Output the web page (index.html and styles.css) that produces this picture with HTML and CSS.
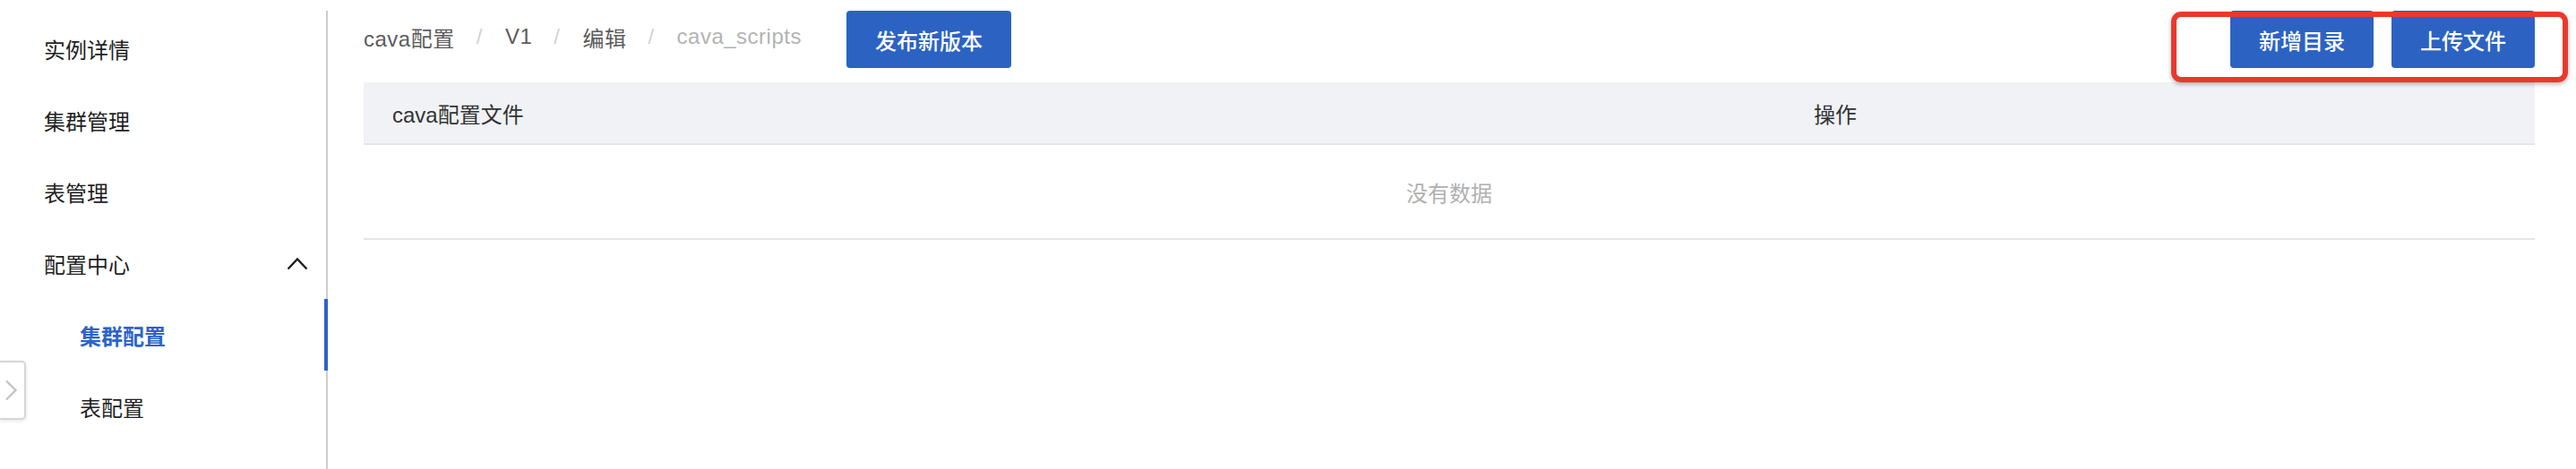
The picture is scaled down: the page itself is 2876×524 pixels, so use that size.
FILE: index.html
```html
<!DOCTYPE html>
<html lang="zh-CN">
<head>
<meta charset="utf-8">
<title>集群配置</title>
<link rel="stylesheet" href="styles.css">
</head>
<body>
<div class="app">
  <aside class="sidebar">
    <nav class="menu">
      <div class="menu-item">实例详情</div>
      <div class="menu-item">集群管理</div>
      <div class="menu-item">表管理</div>
      <div class="menu-item menu-group">
        <span>配置中心</span>
        <svg class="chev-up" width="24" height="15" viewBox="0 0 24 15"><path d="M1.5 13.5 L12 2.5 L22.5 13.5" fill="none" stroke="#1f1f1f" stroke-width="2.4"/></svg>
      </div>
      <div class="menu-item sub active">集群配置</div>
      <div class="menu-item sub">表配置</div>
    </nav>
  </aside>
  <div class="collapse-btn">
    <svg width="15" height="24" viewBox="0 0 15 24"><path d="M2 1.5 L12.5 12 L2 22.5" fill="none" stroke="#c4c4c4" stroke-width="2.4"/></svg>
  </div>
  <main class="main">
    <div class="toolbar">
      <div class="breadcrumb">
        <span class="crumb">cava配置</span><span class="sep">/</span>
        <span class="crumb">V1</span><span class="sep">/</span>
        <span class="crumb">编辑</span><span class="sep">/</span>
        <span class="crumb current">cava_scripts</span>
      </div>
      <button class="btn publish">发布新版本</button>
      <div class="spacer"></div>
      <div class="actions">
        <button class="btn action">新增目录</button>
        <button class="btn action">上传文件</button>
      </div>
    </div>
    <div class="table">
      <div class="thead">
        <div class="th">cava配置文件</div>
        <div class="th">操作</div>
      </div>
      <div class="empty">没有数据</div>
    </div>
  </main>
  <div class="highlight"></div>
</div>
</body>
</html>
```

FILE: styles.css
```css
html, body {
  margin: 0;
  padding: 0;
  background: #ffffff;
}
body {
  font-family: "Liberation Sans", "Noto Sans CJK SC", sans-serif;
  color: #1f1f1f;
}
.app {
  position: relative;
  display: flex;
  height: 524px;
  overflow: hidden;
}
.sidebar {
  width: 366px;
  flex: none;
  margin-top: 12px;
  border-right: 2px solid #c9cdd2;
  box-sizing: border-box;
}
.menu {
  padding-top: 2px;
}
.menu-item {
  position: relative;
  height: 80px;
  display: flex;
  align-items: center;
  padding-left: 49px;
  padding-right: 20px;
  font-size: 24px;
  color: #1f1f1f;
  box-sizing: border-box;
}
.menu-group {
  justify-content: space-between;
}
.chev-up {
  display: block;
}
.menu-item.sub {
  padding-left: 89px;
}
.menu-item.active {
  color: #2d63c8;
  font-weight: 700;
}
.menu-item.active::after {
  content: "";
  position: absolute;
  right: -2px;
  top: 0;
  bottom: 0;
  width: 4px;
  background: #2d63c8;
}
.collapse-btn {
  position: absolute;
  left: 0;
  top: 403px;
  width: 29px;
  height: 66px;
  box-sizing: border-box;
  border: 2px solid #d6d6d6;
  border-left: none;
  border-radius: 0 5px 5px 0;
  background: #fff;
  box-shadow: 0 1px 4px rgba(0, 0, 0, 0.12);
  display: flex;
  align-items: center;
  justify-content: center;
  padding-right: 2px;
}
.main {
  flex: 1;
  padding: 12px 46px 0 40px;
  min-width: 0;
}
.toolbar {
  display: flex;
  align-items: center;
  height: 64px;
}
.breadcrumb {
  display: flex;
  align-items: center;
  font-size: 24px;
  letter-spacing: 0.5px;
  padding-bottom: 6px;
  white-space: nowrap;
}
.crumb {
  color: #5c5c5c;
}
.crumb.current {
  color: #b3b3b3;
}
.sep {
  color: #d2d2d2;
  margin: 0 25px 0 24px;
}
.btn {
  font-family: "Liberation Sans", "Noto Sans CJK SC", sans-serif;
  font-size: 24px;
  font-weight: 500;
  color: #ffffff;
  background: #2c63c2;
  border: none;
  border-radius: 4px;
  height: 64px;
  padding: 0;
  cursor: pointer;
}
.publish {
  width: 184px;
  margin-left: 50px;
}
.spacer {
  flex: 1;
}
.actions {
  display: flex;
  gap: 20px;
}
.action {
  width: 160px;
}
.table {
  margin-top: 16px;
}
.thead {
  display: grid;
  grid-template-columns: 1fr 837px;
  height: 70px;
  background: #f0f2f5;
  border-bottom: 2px solid #e3e5e8;
  box-sizing: border-box;
}
.th {
  display: flex;
  align-items: center;
  padding-left: 32px;
  font-size: 24px;
  color: #333333;
}
.empty {
  height: 106px;
  border-bottom: 2px solid #e3e5e8;
  box-sizing: border-box;
  display: flex;
  align-items: center;
  justify-content: center;
  font-size: 24px;
  color: #b0b0b0;
}
.highlight {
  position: absolute;
  left: 2424px;
  top: 13px;
  width: 443px;
  height: 79px;
  box-sizing: border-box;
  border: 6px solid #e8392c;
  border-radius: 11px;
  box-shadow: 0 2px 5px rgba(0, 0, 0, 0.3);
  pointer-events: none;
}
```
